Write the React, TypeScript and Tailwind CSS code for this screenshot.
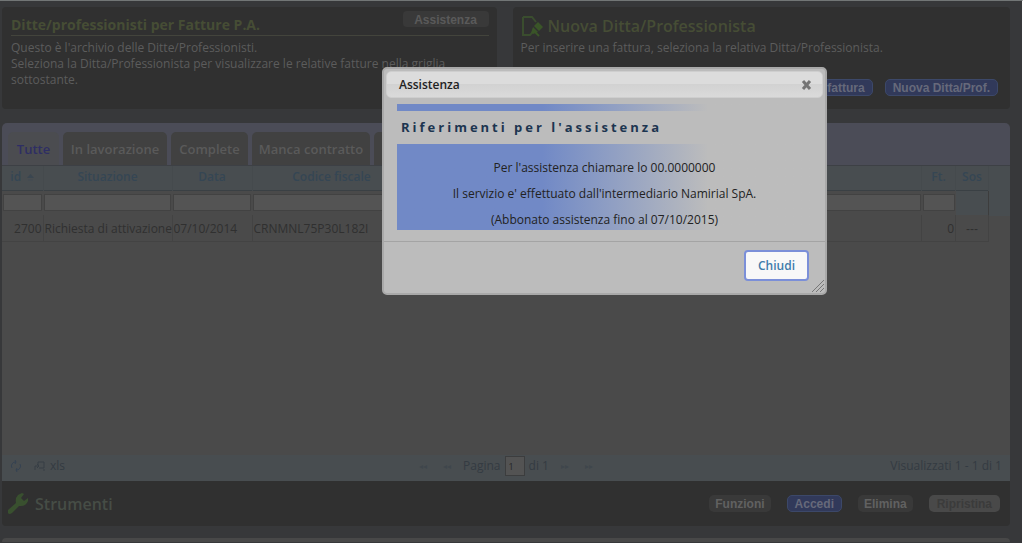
import React, { useState } from 'react';
import { clsx } from 'clsx';

const tabs = ['Tutte', 'In lavorazione', 'Complete', 'Manca contratto', ''];

const PillButton = ({ label, variant = 'dark' }: { label: string; variant?: 'dark' | 'blue' | 'off' }) => (
  <button
    disabled={variant === 'off'}
    className={clsx(
      "h-[17px] rounded-[5px] font-['Liberation_Sans'] text-[12px] font-bold leading-[16px]",
      variant === 'dark' && 'bg-[#393939] px-1.5 text-[#616161]',
      variant === 'blue' && 'border border-[#3c4869] bg-[#31395a] px-[7px] text-[#66697a]',
      variant === 'off' && 'bg-[#494949] px-2 text-[#3b3b3b]'
    )}
  >
    {label}
  </button>
);

const NoteIcon = () => (
  <svg width="22" height="23" viewBox="0 0 22 23" fill="none">
    <path d="M2 2h9l4 5M2 2v18h7M2 20h7l2-2" stroke="#3a4d2e" strokeWidth="2" />
    <path d="M17 7l5 5-4 4-5-5z" fill="#3a5528" />
    <path d="M12 12l5 5-5 2-2-1z" fill="#3a5528" />
    <path d="M14 17l4 4" stroke="#3a5528" strokeWidth="2" />
  </svg>
);

const WrenchIcon = () => (
  <svg width="22" height="22" viewBox="0 0 22 22">
    <path
      d="M1 17L9 10Q8 5 11 2L15 0L17 1L14 5L17 8L21 5V8Q19 13 14 13L12 13L5 20Q2 22 1 20Z"
      fill="#39502f"
    />
  </svg>
);

const Filter = ({ label }: { label: string }) => (
  <input aria-label={label} className="block h-[17px] w-full border border-[#424242] bg-[#545454]" />
);

const Header = () => (
  <header className="flex gap-4 pt-1.5 pr-3 pl-0.5">
    <section className="h-[102px] flex-1 rounded-[4px] bg-[#303030] pt-1 pr-2 pl-[9px]">
      <div className="flex items-start justify-between border-b border-[#43443c]">
        <h2 className="pt-1 text-[14px] font-bold leading-[20px] text-[#464d35]">Ditte/professionisti per Fatture P.A.</h2>
        <button className="h-4 w-[86px] rounded-[4px] bg-[#393939] font-['Liberation_Sans'] text-[12px] font-bold text-[#5a5a5a]">
          Assistenza
        </button>
      </div>
      <p className="pt-1 text-[12px] leading-[16px] text-[#5c5c5c]">
        Questo è l'archivio delle Ditte/Professionisti.
        <br />
        Seleziona la Ditta/Professionista per visualizzare le relative fatture nella griglia
        <br />
        sottostante.
      </p>
    </section>
    <section className="flex h-[102px] flex-1 flex-col rounded-[4px] bg-[#303030] pt-[7px] pr-3 pl-2">
      <div className="flex h-6 items-center gap-[5px]">
        <NoteIcon />
        <h2 className="text-[16px] font-semibold leading-[22px] text-[#464d35]">Nuova Ditta/Professionista</h2>
      </div>
      <p className="text-[12px] leading-[20px] text-[#5c5c5c]">
        Per inserire una fattura, seleziona la relativa Ditta/Professionista.
      </p>
      <div className="mt-[21px] flex justify-end gap-3">
        <PillButton label="Nuova fattura" variant="blue" />
        <PillButton label="Nuova Ditta/Prof." variant="blue" />
      </div>
    </section>
  </header>
);

const TabBar = () => {
  const [active, setActive] = useState(0);

  return (
    <nav className="flex h-[42px] items-end gap-1 rounded-t-[5px] bg-[#4b4c57] pl-1.5">
      {tabs.map((tab, i) => (
        <button
          key={i}
          onClick={() => setActive(i)}
          className={clsx(
            'h-[33px] rounded-t-[5px] text-[13px] font-semibold leading-[32px]',
            ['w-[51px]', 'w-[104px]', 'w-[77px]', 'w-[118px]', 'w-[110px]'][i],
            active === i ? 'bg-[#4b4c50] text-[#2e2e64]' : 'bg-[#414141] text-[#5a5a5a]'
          )}
        >
          {tab}
        </button>
      ))}
    </nav>
  );
};

const GridTable = () => (
  <div className="h-[290px] border-t border-[#3d4045] bg-[#4a4a4a]">
    <div className="bg-[linear-gradient(#484d50_50px,transparent_50px)] pr-[21px]">
      <table className="w-full table-fixed border-collapse text-[12px] text-[#303030]">
        <colgroup>
          <col className="w-[41px]" />
          <col className="w-[129px]" />
          <col className="w-[80px]" />
          <col className="w-[159px]" />
          <col />
          <col className="w-[34px]" />
          <col className="w-[33px]" />
        </colgroup>
        <thead>
          <tr className="h-6 border-b border-[#3a4044] text-[#354654] [&>th]:border-r [&>th]:border-[#454a4d] [&>th]:p-0 [&>th]:pb-px [&>th]:font-semibold">
            <th>
              <span className="flex items-center justify-center gap-1.5">
                id
                <svg width="7" height="7" viewBox="0 0 7 7">
                  <path d="M0 4L3.5 0L7 4Z" fill="#3a4650" />
                  <path d="M1 6h5" stroke="#414b52" />
                </svg>
              </span>
            </th>
            <th>Situazione</th>
            <th>Data</th>
            <th>Codice fiscale</th>
            <th></th>
            <th>Ft.</th>
            <th>Sos</th>
          </tr>
          <tr className="h-[25px] bg-[#4a4a4a] [&>td]:px-px [&>td]:py-0">
            <td><Filter label="id" /></td>
            <td><Filter label="Situazione" /></td>
            <td><Filter label="Data" /></td>
            <td><Filter label="Codice fiscale" /></td>
            <td><Filter label="Cerca" /></td>
            <td><Filter label="Ft." /></td>
            <td className="border-r border-[#3d3d3d] bg-[#484d50]"></td>
          </tr>
        </thead>
        <tbody>
          <tr className="h-[26px] border-b border-[#434343] bg-[#4a4a4a] [&>td]:border-r [&>td]:border-[#434343] [&>td]:px-px [&>td]:pt-0.5 [&>td]:pb-0 [&>td]:whitespace-nowrap">
            <td className="text-right">2700</td>
            <td>Richiesta di attivazione</td>
            <td>07/10/2014</td>
            <td>CRNMNL75P30L182I</td>
            <td></td>
            <td className="text-right">0</td>
            <td className="text-center font-['Liberation_Sans']">---</td>
          </tr>
        </tbody>
      </table>
    </div>
  </div>
);

const Pager = () => (
  <div className="grid h-[26px] grid-cols-3 items-center bg-[#484d50] px-2 pb-1 text-[12px] text-[#343b42]">
    <div className="flex items-center gap-3">
      <svg width="12" height="12" viewBox="0 0 12 12" fill="none" stroke="#344252" strokeWidth="1">
        <path d="M2 8a4 4 0 0 1 4-6l-1-2m1 2L5 4M10 4a4 4 0 0 1-4 6l1 2m-1-2 1-2" />
      </svg>
      <button className="flex items-center gap-1">
        <svg width="12" height="11" viewBox="0 0 12 11" fill="none" stroke="#363e45">
          <path d="M4 1h6v6H5M4 1v3M1 9V5h4M3 3l2 2-2 2M9 9h2" />
        </svg>
        xls
      </button>
    </div>
    <div className="flex items-center justify-center gap-2">
      <span className="flex gap-4 pr-1 text-[8px] text-[#3f464c]">
        <span>◂◂</span>
        <span>◂◂</span>
      </span>
      <label className="flex items-center gap-1">
        Pagina
        <input defaultValue="1" className="h-5 w-5 border border-[#3c3d3e] bg-[#535353] pl-[3px] text-[9px] text-[#262626]" />
        di 1
      </label>
      <span className="flex gap-4 pl-1 text-[8px] text-[#3f464c]">
        <span>▸▸</span>
        <span>▸▸</span>
      </span>
    </div>
    <span className="text-right">Visualizzati 1 - 1 di 1</span>
  </div>
);

const Tools = () => (
  <footer className="mr-3 ml-0.5 flex h-[45px] items-center justify-between rounded-b-[4px] bg-[#303030] pr-2.5 pl-[5px]">
    <div className="flex items-center gap-[6px]">
      <WrenchIcon />
      <h2 className="text-[16px] font-semibold leading-[22px] text-[#464d46]">Strumenti</h2>
    </div>
    <div className="flex gap-4">
      <PillButton label="Funzioni" />
      <PillButton label="Accedi" variant="blue" />
      <PillButton label="Elimina" />
      <PillButton label="Ripristina" variant="off" />
    </div>
  </footer>
);

const AssistenzaDialog = ({ onClose }: { onClose: () => void }) => (
  <div
    role="dialog"
    aria-labelledby="dialog-title"
    className="absolute top-[66px] left-[382px] w-[445px] rounded-[5px] border-2 border-[#a9a9a9] bg-[#bcbcbc] text-[12px] text-[#222222]"
  >
    <div className="m-0.5 flex h-[27px] items-center justify-between rounded-[5px] border border-[#cecece] bg-[linear-gradient(#dcdcdc_50%,#d2d2d2_50%,#dadada)] pr-2.5 pl-3">
      <h3 id="dialog-title" className="font-semibold">Assistenza</h3>
      <button aria-label="Chiudi finestra" onClick={onClose}>
        <svg width="11" height="10" viewBox="0 0 11 10">
          <path d="M2 1l7 8M9 1L2 9" stroke="#747474" strokeWidth="3" />
        </svg>
      </button>
    </div>
    <div className="px-[13px] pt-1">
      <div className="h-[7px] bg-linear-to-r from-[#7189c6] from-35% to-[#bcbcbc] to-75%" />
      <h4 className="h-[33px] pl-1 text-[13px] font-bold leading-[33px] tracking-[3px] text-[#1c3550]">
        Riferimenti per l'assistenza
      </h4>
      <div className="h-[86px] bg-linear-to-r from-[#7189c6] from-35% to-[#bcbcbc] to-75% pt-[11px] text-center leading-[26px]">
        <p>Per l'assistenza chiamare lo 00.0000000</p>
        <p>Il servizio e' effettuato dall'intermediario Namirial SpA.</p>
        <p>(Abbonato assistenza fino al 07/10/2015)</p>
      </div>
    </div>
    <div className="mt-[11px] flex h-[52px] justify-end border-t border-[#a4a4a4] pt-2 pr-4">
      <button
        onClick={onClose}
        className="h-[31px] w-[65px] rounded-[4px] border-2 border-[#7b8fd8] bg-[#f8f8f8] font-semibold text-[#3f7cab]"
      >
        Chiudi
      </button>
    </div>
    <svg className="absolute right-0 bottom-0" width="14" height="14" viewBox="0 0 14 14" stroke="#777777">
      <path d="M1 13L13 1M5 13L13 5M9 13L13 9" />
    </svg>
  </div>
);

export default function App() {
  const [open, setOpen] = useState(true);

  return (
    <div className="relative min-h-screen border-t border-r border-t-[#727676] border-r-white bg-[#37383a] font-['Open_Sans',sans-serif]">
      <Header />
      <main className="mt-[14px] mr-3 ml-0.5">
        <TabBar />
        <GridTable />
        <Pager />
      </main>
      <Tools />
      <div className="mt-3 mr-3 ml-0.5 h-1 rounded-t-[4px] bg-[#484848]" />
      {open && <AssistenzaDialog onClose={() => setOpen(false)} />}
    </div>
  );
}
